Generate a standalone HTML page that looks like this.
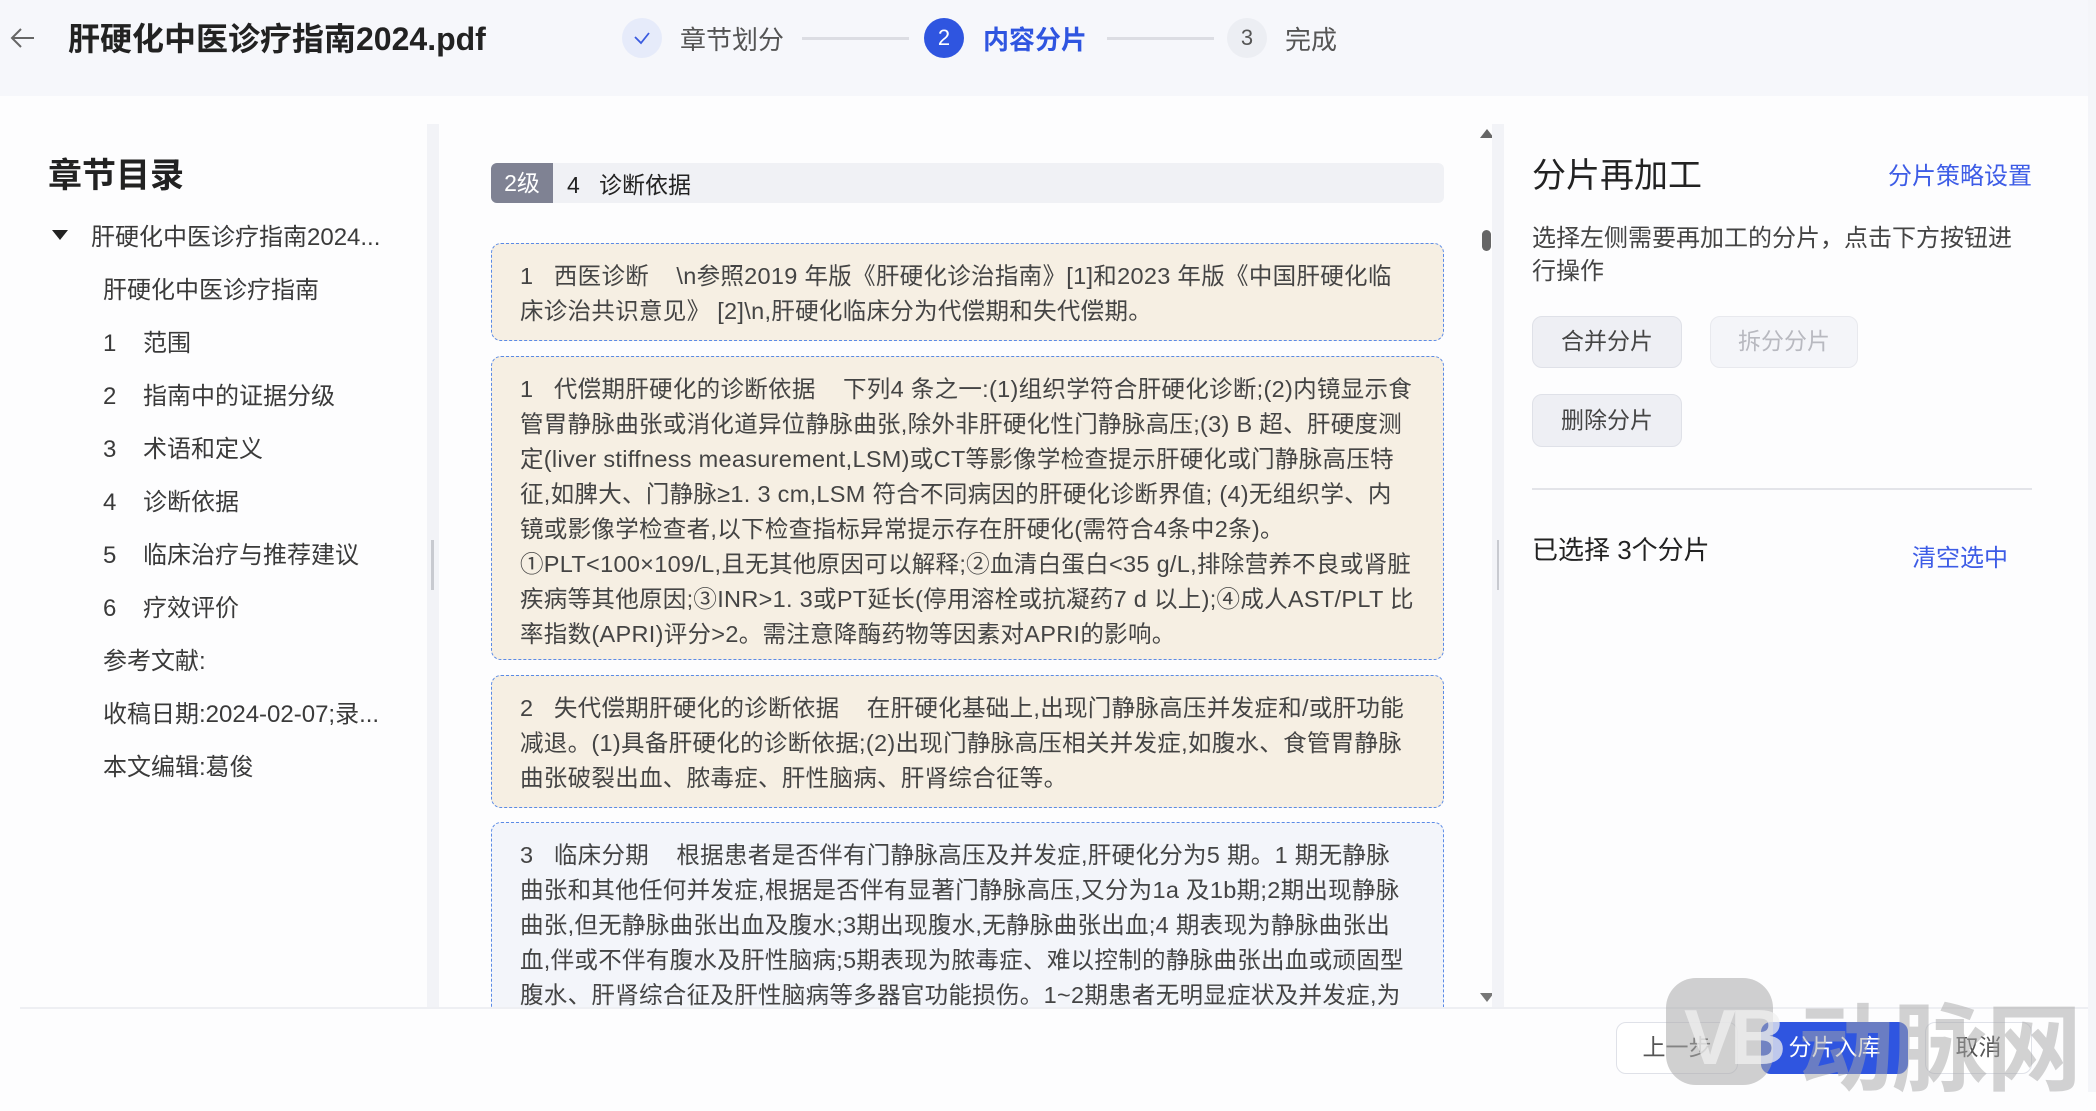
<!DOCTYPE html>
<html><head><meta charset="utf-8">
<style>
*{margin:0;padding:0;box-sizing:border-box}
body{width:2096px;height:1092px;overflow:hidden;background:#fdfdfe;font-family:"Liberation Sans","Noto Sans CJK SC",sans-serif;color:#333;position:relative}
.a{position:absolute;white-space:nowrap}
.hdr{position:absolute;left:0;top:0;width:2096px;height:96px;background:#f6f7fb}
.circ{position:absolute;width:40px;height:40px;border-radius:50%;text-align:center;line-height:40px;font-size:22px}
.line{position:absolute;height:3px;background:#dcdde3;top:37px}
.toc{font-size:24px;color:#3a3a3a}
.card{position:absolute;left:491px;width:953px;border:1.5px dashed #5a8ae6;border-radius:10px;background:#f6efe3;padding:15px 20px 0 28px;font-size:23.5px;color:#444;line-height:35px}
.card div{white-space:nowrap;letter-spacing:0.3px}
.btn{position:absolute;border-radius:10px;background:#eeeff4;border:1.5px solid #dfe1e8;text-align:center;font-size:23px;color:#444}
</style></head><body>
<div class="hdr"></div>
<svg class="a" style="left:8px;top:26px" width="28" height="24" viewBox="0 0 28 24"><path d="M26 12H4M13 3L4 12l9 9" stroke="#666" stroke-width="2" fill="none"/></svg>
<div class="a" style="left:68px;top:14px;font-size:32px;font-weight:bold;color:#222">肝硬化中医诊疗指南2024.pdf</div>
<div class="circ" style="left:622px;top:18px;background:#e6ebfa;color:#3a5be0"><svg width="20" height="14" viewBox="0 0 20 14" style="margin-top:13px"><path d="M3 6l6 6L17 2" stroke="#3a5be0" stroke-width="1.8" fill="none"/></svg></div>
<div class="a" style="left:680px;top:20px;font-size:26px;color:#555">章节划分</div>
<div class="line" style="left:802px;width:107px"></div>
<div class="circ" style="left:924px;top:18px;background:#2f55e0;color:#fff">2</div>
<div class="a" style="left:983px;top:20px;font-size:26px;color:#2f55e0;font-weight:bold">内容分片</div>
<div class="line" style="left:1107px;width:107px"></div>
<div class="circ" style="left:1227px;top:18px;background:#eceef3;color:#555">3</div>
<div class="a" style="left:1285px;top:20px;font-size:26px;color:#555">完成</div>

<div class="a" style="left:48px;top:148px;font-size:34px;font-weight:bold;color:#222">章节目录</div>
<svg class="a" style="left:52px;top:230px" width="16" height="10"><path d="M0 0h16L8 10z" fill="#222"/></svg>
<div class="a toc" style="left:91px;top:217px">肝硬化中医诊疗指南2024...</div>
<div class="a toc" style="left:103px;top:270px">肝硬化中医诊疗指南</div>
<div class="a toc" style="left:103px;top:323px">1&nbsp;&nbsp;&nbsp; 范围</div>
<div class="a toc" style="left:103px;top:376px">2&nbsp;&nbsp;&nbsp; 指南中的证据分级</div>
<div class="a toc" style="left:103px;top:429px">3&nbsp;&nbsp;&nbsp; 术语和定义</div>
<div class="a toc" style="left:103px;top:482px">4&nbsp;&nbsp;&nbsp; 诊断依据</div>
<div class="a toc" style="left:103px;top:535px">5&nbsp;&nbsp;&nbsp; 临床治疗与推荐建议</div>
<div class="a toc" style="left:103px;top:588px">6&nbsp;&nbsp;&nbsp; 疗效评价</div>
<div class="a toc" style="left:103px;top:641px">参考文献:</div>
<div class="a toc" style="left:103px;top:694px">收稿日期:2024-02-07;录...</div>
<div class="a toc" style="left:103px;top:747px">本文编辑:葛俊</div>

<div class="a" style="left:427px;top:124px;width:12px;height:884px;background:#f2f3f7"></div>
<div class="a" style="left:431px;top:540px;width:3px;height:50px;background:#c8cad0"></div>

<div class="a" style="left:491px;top:163px;width:953px;height:40px;background:#f0f1f5;border-radius:6px"></div>
<div class="a" style="left:491px;top:163px;width:62px;height:40px;background:#7f8293;border-radius:6px 0 0 6px;color:#fff;font-size:23px;line-height:40px;text-align:center">2级</div>
<div class="a" style="left:567px;top:166px;font-size:23px;color:#222">4&nbsp;&nbsp; 诊断依据</div>

<div class="card" style="top:243px;height:98px">
<div>1&nbsp;&nbsp; 西医诊断&nbsp;&nbsp;&nbsp; \n参照2019 年版《肝硬化诊治指南》[1]和2023 年版《中国肝硬化临</div>
<div>床诊治共识意见》 [2]\n,肝硬化临床分为代偿期和失代偿期。</div>
</div>
<div class="card" style="top:356px;height:304px">
<div>1&nbsp;&nbsp; 代偿期肝硬化的诊断依据&nbsp;&nbsp;&nbsp; 下列4 条之一:(1)组织学符合肝硬化诊断;(2)内镜显示食</div>
<div>管胃静脉曲张或消化道异位静脉曲张,除外非肝硬化性门静脉高压;(3) B 超、肝硬度测</div>
<div>定(liver stiffness measurement,LSM)或CT等影像学检查提示肝硬化或门静脉高压特</div>
<div>征,如脾大、门静脉≥1. 3 cm,LSM 符合不同病因的肝硬化诊断界值; (4)无组织学、内</div>
<div>镜或影像学检查者,以下检查指标异常提示存在肝硬化(需符合4条中2条)。</div>
<div>①PLT&lt;100×109/L,且无其他原因可以解释;②血清白蛋白&lt;35 g/L,排除营养不良或肾脏</div>
<div>疾病等其他原因;③INR&gt;1. 3或PT延长(停用溶栓或抗凝药7 d 以上);④成人AST/PLT 比</div>
<div>率指数(APRI)评分&gt;2。需注意降酶药物等因素对APRI的影响。</div>
</div>
<div class="card" style="top:675px;height:133px">
<div>2&nbsp;&nbsp; 失代偿期肝硬化的诊断依据&nbsp;&nbsp;&nbsp; 在肝硬化基础上,出现门静脉高压并发症和/或肝功能</div>
<div>减退。(1)具备肝硬化的诊断依据;(2)出现门静脉高压相关并发症,如腹水、食管胃静脉</div>
<div>曲张破裂出血、脓毒症、肝性脑病、肝肾综合征等。</div>
</div>
<div class="card" style="top:822px;height:185px;background:#f3f5fa;overflow:hidden;border-bottom:none;border-radius:10px 10px 0 0">
<div>3&nbsp;&nbsp; 临床分期&nbsp;&nbsp;&nbsp; 根据患者是否伴有门静脉高压及并发症,肝硬化分为5 期。1 期无静脉</div>
<div>曲张和其他任何并发症,根据是否伴有显著门静脉高压,又分为1a 及1b期;2期出现静脉</div>
<div>曲张,但无静脉曲张出血及腹水;3期出现腹水,无静脉曲张出血;4 期表现为静脉曲张出</div>
<div>血,伴或不伴有腹水及肝性脑病;5期表现为脓毒症、难以控制的静脉曲张出血或顽固型</div>
<div>腹水、肝肾综合征及肝性脑病等多器官功能损伤。1~2期患者无明显症状及并发症,为</div>
</div>

<svg class="a" style="left:1480px;top:129px" width="14" height="9"><path d="M0 9h14L7 0z" fill="#666"/></svg>
<div class="a" style="left:1482px;top:230px;width:9px;height:21px;border-radius:5px;background:#666"></div>
<svg class="a" style="left:1480px;top:993px" width="14" height="9"><path d="M0 0h14L7 9z" fill="#777"/></svg>
<div class="a" style="left:1492px;top:124px;width:12px;height:884px;background:#f2f3f7"></div>
<div class="a" style="left:1497px;top:540px;width:2px;height:50px;background:#c8cad0"></div>

<div class="a" style="left:1532px;top:148px;font-size:34px;color:#222">分片再加工</div>
<div class="a" style="left:1888px;top:156px;font-size:24px;color:#3d5ce6">分片策略设置</div>
<div class="a" style="left:1532px;top:222px;font-size:24px;color:#444;line-height:33px;white-space:normal;width:500px">选择左侧需要再加工的分片，点击下方按钮进行操作</div>
<div class="btn" style="left:1532px;top:316px;width:150px;height:52px;line-height:49px">合并分片</div>
<div class="btn" style="left:1710px;top:316px;width:148px;height:52px;line-height:49px;background:#f4f5f9;border-color:#e8e9ee;color:#b8b9c0">拆分分片</div>
<div class="btn" style="left:1532px;top:394px;width:150px;height:53px;line-height:50px">删除分片</div>
<div class="a" style="left:1532px;top:488px;width:500px;height:2px;background:#e3e4e9"></div>
<div class="a" style="left:1532px;top:530px;font-size:26px;color:#222">已选择 3个分片</div>
<div class="a" style="left:1912px;top:538px;font-size:24px;color:#3d5ce6">清空选中</div>

<div class="a" style="left:20px;top:1007px;width:2076px;height:2px;background:#eeeff3"></div>
<div class="a" style="left:2088px;top:0;width:8px;height:1092px;background:#f4f5f9"></div>
<div class="btn" style="left:1616px;top:1022px;width:122px;height:52px;line-height:49px;background:#fff;color:#555">上一步</div>
<div class="btn" style="left:1761px;top:1022px;width:147px;height:52px;line-height:49px;background:#2f55e0;border-color:#2f55e0;color:#fff">分片入库</div>
<div class="btn" style="left:1925px;top:1022px;width:107px;height:52px;line-height:49px;background:#fff;color:#555">取消</div>

<div class="a" style="left:1666px;top:978px;width:107px;height:107px;border-radius:30px;background:rgba(170,170,170,0.55)"></div>
<div class="a" style="left:1684px;top:992px;font-size:78px;font-weight:bold;color:rgba(240,240,240,0.75);letter-spacing:-6px">VB</div>
<div class="a" style="left:1798px;top:972px;font-size:96px;font-weight:bold;color:rgba(165,165,165,0.5);letter-spacing:-2px">动脉网</div>
</body></html>
